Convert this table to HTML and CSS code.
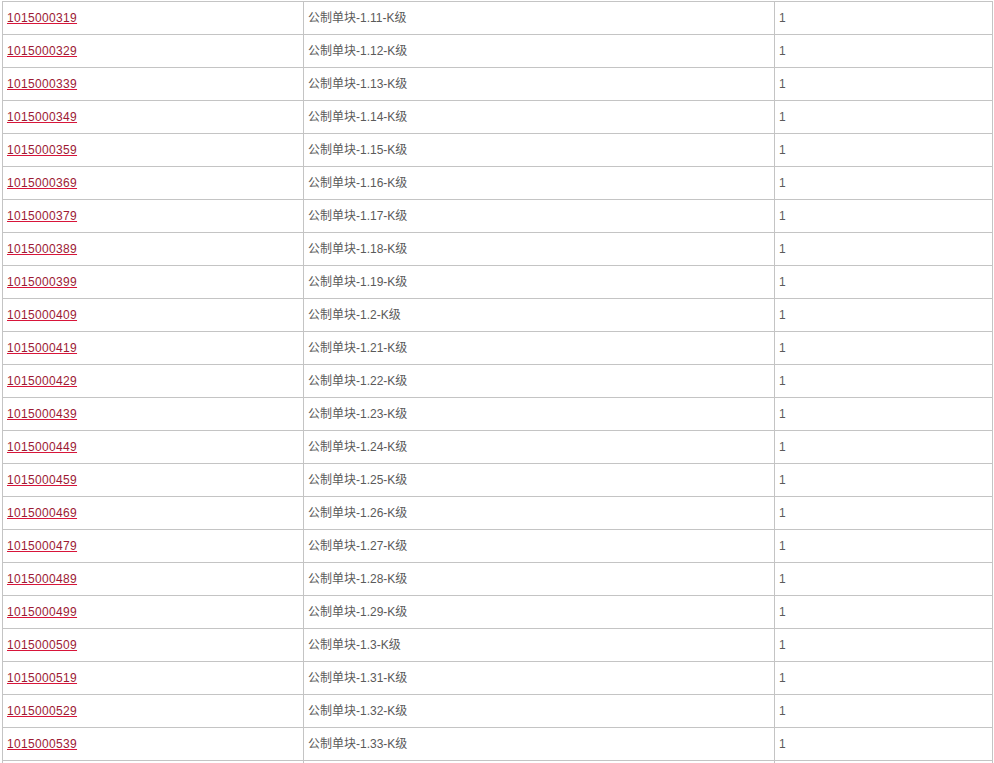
FILE: index.html
```html
<!DOCTYPE html>
<html lang="zh-CN">
<head>
<meta charset="utf-8">
<title>列表</title>
<link rel="stylesheet" href="styles.css">
</head>
<body>
<table class="list">
<colgroup><col class="c1"><col class="c2"><col class="c3"></colgroup>
<tbody>
<tr><td><a href="#">1015000319</a></td><td>公制单块-1.11-K级</td><td>1</td></tr>
<tr><td><a href="#">1015000329</a></td><td>公制单块-1.12-K级</td><td>1</td></tr>
<tr><td><a href="#">1015000339</a></td><td>公制单块-1.13-K级</td><td>1</td></tr>
<tr><td><a href="#">1015000349</a></td><td>公制单块-1.14-K级</td><td>1</td></tr>
<tr><td><a href="#">1015000359</a></td><td>公制单块-1.15-K级</td><td>1</td></tr>
<tr><td><a href="#">1015000369</a></td><td>公制单块-1.16-K级</td><td>1</td></tr>
<tr><td><a href="#">1015000379</a></td><td>公制单块-1.17-K级</td><td>1</td></tr>
<tr><td><a href="#">1015000389</a></td><td>公制单块-1.18-K级</td><td>1</td></tr>
<tr><td><a href="#">1015000399</a></td><td>公制单块-1.19-K级</td><td>1</td></tr>
<tr><td><a href="#">1015000409</a></td><td>公制单块-1.2-K级</td><td>1</td></tr>
<tr><td><a href="#">1015000419</a></td><td>公制单块-1.21-K级</td><td>1</td></tr>
<tr><td><a href="#">1015000429</a></td><td>公制单块-1.22-K级</td><td>1</td></tr>
<tr><td><a href="#">1015000439</a></td><td>公制单块-1.23-K级</td><td>1</td></tr>
<tr><td><a href="#">1015000449</a></td><td>公制单块-1.24-K级</td><td>1</td></tr>
<tr><td><a href="#">1015000459</a></td><td>公制单块-1.25-K级</td><td>1</td></tr>
<tr><td><a href="#">1015000469</a></td><td>公制单块-1.26-K级</td><td>1</td></tr>
<tr><td><a href="#">1015000479</a></td><td>公制单块-1.27-K级</td><td>1</td></tr>
<tr><td><a href="#">1015000489</a></td><td>公制单块-1.28-K级</td><td>1</td></tr>
<tr><td><a href="#">1015000499</a></td><td>公制单块-1.29-K级</td><td>1</td></tr>
<tr><td><a href="#">1015000509</a></td><td>公制单块-1.3-K级</td><td>1</td></tr>
<tr><td><a href="#">1015000519</a></td><td>公制单块-1.31-K级</td><td>1</td></tr>
<tr><td><a href="#">1015000529</a></td><td>公制单块-1.32-K级</td><td>1</td></tr>
<tr><td><a href="#">1015000539</a></td><td>公制单块-1.33-K级</td><td>1</td></tr>
<tr><td><a href="#">1015000549</a></td><td>公制单块-1.34-K级</td><td>1</td></tr>
</tbody>
</table>
</body>
</html>
```
FILE: styles.css
```css
html, body {
  margin: 0;
  padding: 0;
  background: #ffffff;
}
body {
  padding: 1px 0 0 2px;
  font-family: "Liberation Sans", Arial, "Noto Sans CJK SC", sans-serif;
  font-size: 12px;
  color: #5a5a5a;
}
.list {
  border-collapse: collapse;
  table-layout: fixed;
  width: 990px;
}
.list .c1 { width: 301px; }
.list .c2 { width: 471px; }
.list .c3 { width: 218px; }
.list td {
  border: 1px solid #c4c4c4;
  height: 32px;
  padding: 0 4px;
  vertical-align: middle;
  line-height: 14px;
  white-space: nowrap;
}
.list a {
  color: #9c1a34;
  text-decoration: underline;
  text-decoration-color: #d8153a;
  letter-spacing: 0.33px;
}
```
